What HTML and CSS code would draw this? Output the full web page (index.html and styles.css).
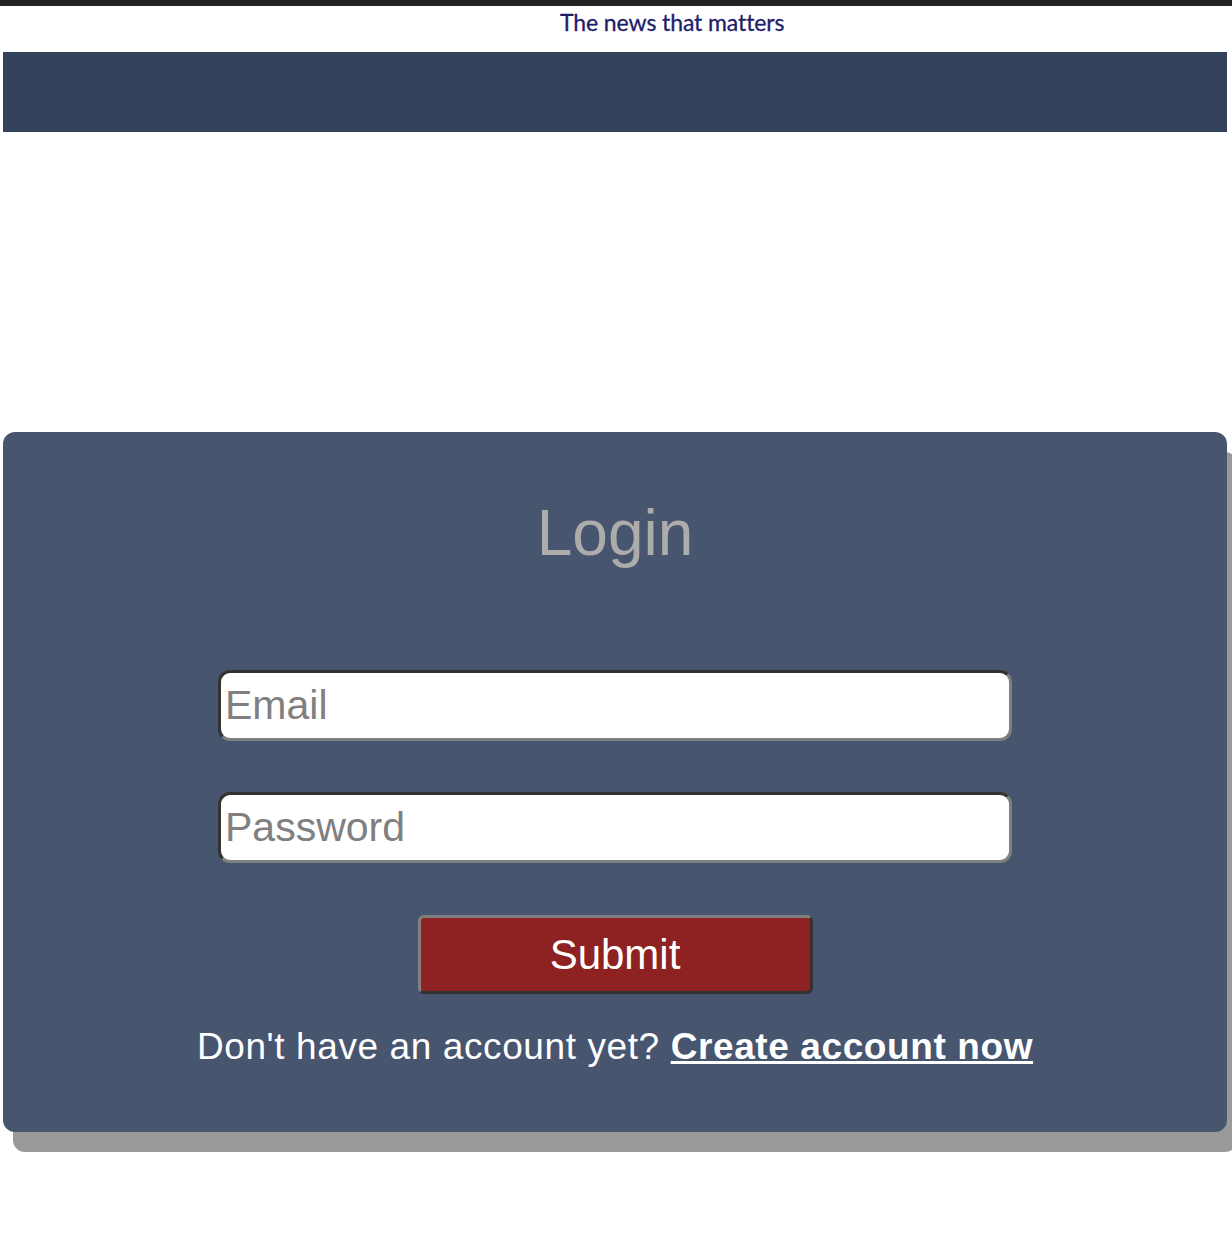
FILE: index.html
```html
<!DOCTYPE html>
<html lang="en">
<head>
<meta charset="utf-8">
<title>Login</title>
<link rel="stylesheet" href="styles.css">
</head>
<body>
<div class="topbar"></div>
<header class="masthead">
  <div class="tagline">The news that matters</div>
</header>
<div class="page">
  <nav class="navbar"></nav>
  <main class="main">
    <section class="card">
      <h1 class="title">Login</h1>
      <form class="form">
        <input class="field field-email" type="email" placeholder="Email">
        <input class="field field-password" type="password" placeholder="Password">
        <button class="submit" type="button">Submit</button>
      </form>
      <p class="signup">Don't have an account yet? <a class="signup-link" href="#">Create account now</a></p>
    </section>
  </main>
</div>
</body>
</html>
```

FILE: styles.css
```css
html, body {
  margin: 0;
  padding: 0;
  background: #ffffff;
  overflow-x: hidden;
}

body {
  font-family: "Liberation Sans", Arial, Helvetica, sans-serif;
}

.topbar {
  height: 6px;
  background: #222222;
}

.masthead {
  height: 46px;
  display: flex;
  align-items: flex-start;
}

.tagline {
  margin-left: 560px;
  margin-top: 3px;
  font-family: Lato, "Open Sans", sans-serif;
  font-size: 23px;
  line-height: 26px;
  color: #1d1d6b;
  letter-spacing: -0.1px;
  -webkit-text-stroke: 0.3px #1d1d6b;
}

.page {
  padding: 0 5px 0 3px;
}

.navbar {
  height: 80px;
  background: #33425b;
}

.main {
  padding-top: 300px;
  padding-bottom: 100px;
}

.card {
  background: #47556f;
  border-radius: 12px;
  box-shadow: 10px 20px 0 #999999;
  padding: 64px 0 64px;
  display: flex;
  flex-direction: column;
  align-items: center;
}

.title {
  margin: 0;
  font-size: 64px;
  line-height: 74px;
  font-weight: normal;
  color: #acacac;
}

.form {
  margin-top: 100px;
  display: flex;
  flex-direction: column;
  align-items: center;
}

.field {
  box-sizing: border-box;
  width: 794px;
  height: 71px;
  margin: 0;
  padding: 0 5px 0 4px;
  border: 3px solid;
  border-color: #333333 #808080 #808080 #333333;
  border-radius: 12px;
  background: #ffffff;
  font-family: "Liberation Sans", Arial, sans-serif;
  font-size: 41px;
  color: #222;
  outline: none;
}

.field-email {
  margin-bottom: 51px;
}

.field-password {
  margin-bottom: 52px;
}

.field::placeholder {
  color: #808080;
  opacity: 1;
}

.submit {
  box-sizing: border-box;
  width: 395px;
  height: 79px;
  margin: 0;
  border: 3px solid;
  border-color: #808080 #333333 #333333 #808080;
  border-radius: 6px;
  background: #8e2222;
  color: #ffffff;
  font-family: "Liberation Sans", Arial, sans-serif;
  font-size: 42px;
  cursor: pointer;
}

.signup {
  margin: 32px 0 0;
  font-size: 37px;
  line-height: 42px;
  letter-spacing: 0.6px;
  color: #ffffff;
}

.signup-link {
  color: #ffffff;
  font-weight: bold;
  text-decoration: underline;
}
```
